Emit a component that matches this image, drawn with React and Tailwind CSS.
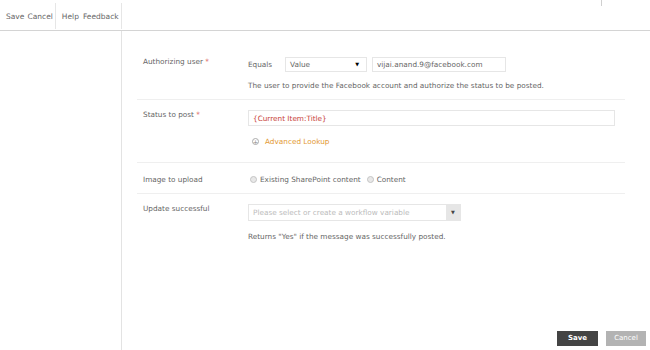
import React from 'react';

const font = { fontFamily: '"DejaVu Sans", Verdana, sans-serif' };

function Radio({ label }) {
  return (
    <label className="flex items-center gap-[3px]">
      <span className="w-[7px] h-[7px] rounded-full border border-[#c4c4c4] bg-[#e8e8e8]" />
      <span>{label}</span>
    </label>
  );
}

export default function App() {
  return (
    <div className="w-[650px] h-[350px] bg-white flex flex-col text-[7.3px] leading-[11px] text-[#666]" style={font}>
      {/* toolbar */}
      <div className="h-[31px] shrink-0 flex items-start border-b border-[#d4d4d4]">
        <div className="flex items-center h-[26px] mt-[3px] text-[7.5px]">
          <span className="pl-[6px] pr-[3px]">Save</span>
          <span className="pr-[2px]">Cancel</span>
          <span className="w-px h-full bg-[#e6e6e6] mr-[6px]" />
          <span className="pr-[4px]">Help</span>
          <span className="pr-[2px]">Feedback</span>
          <span className="w-px h-full bg-[#e6e6e6]" />
        </div>
        <div className="ml-auto mr-[48px] w-px h-[6px] bg-[#d0d0d0]" />
      </div>

      <div className="flex flex-1 min-h-0">
        <div className="w-[122px] shrink-0 border-r border-[#e3e3e3]" />

        <div className="flex-1 flex flex-col pl-[15px] pr-[4px]">
          <div className="w-[488px] pt-[19px]">
            {/* Authorizing user */}
            <div className="flex border-b border-[#efefef] pl-[6px] pt-[7px] pb-[8px]">
              <div className="w-[105px] -mt-[1px]">
                Authorizing user <span className="text-[#d9534f]">*</span>
              </div>
              <div className="flex flex-col">
                <div className="flex items-center">
                  <span className="w-[37px]">Equals</span>
                  <div className="w-[82px] h-[15px] border border-[#e6e6e6] flex items-center pl-[4px] pr-[7px]">
                    <span className="flex-1">Value</span>
                    <span className="text-[5px] text-black">▼</span>
                  </div>
                  <div className="ml-[5px] w-[134px] h-[15px] border border-[#e6e6e6] flex items-center pl-[4px]">
                    vijai.anand.9@facebook.com
                  </div>
                </div>
                <div className="mt-[8px]">
                  The user to provide the Facebook account and authorize the status to be posted.
                </div>
              </div>
            </div>

            {/* Status to post */}
            <div className="flex border-b border-[#efefef] pl-[6px] pt-[10px] pb-[15px]">
              <div className="w-[105px] -mt-[1px]">
                Status to post <span className="text-[#d9534f]">*</span>
              </div>
              <div className="flex flex-col">
                <div className="w-[367px] h-[16px] border border-[#e6e6e6] flex items-center pl-[4px] text-[#c9453a]">
                  {'{Current Item:Title}'}
                </div>
                <div className="mt-[10px] flex items-center pl-[4px]">
                  <span className="w-[7px] h-[7px] rounded-full border border-[#aaa] flex items-center justify-center text-[6px] leading-none text-[#888]">+</span>
                  <span className="ml-[6px] text-[#e39a35]">Advanced Lookup</span>
                </div>
              </div>
            </div>

            {/* Image to upload */}
            <div className="flex border-b border-[#efefef] pl-[6px] pt-[11px] pb-[8px]">
              <div className="w-[105px]">Image to upload</div>
              <div className="flex items-center gap-[6px] pl-[2px]">
                <Radio label="Existing SharePoint content" />
                <Radio label="Content" />
              </div>
            </div>

            {/* Update successful */}
            <div className="flex pl-[6px] pt-[9px]">
              <div className="w-[105px]">Update successful</div>
              <div className="flex flex-col pt-[1px]">
                <div className="w-[213px] h-[17px] border border-[#e6e6e6] flex items-center">
                  <span className="flex-1 pl-[4px] text-[#bbb]">Please select or create a workflow variable</span>
                  <span className="w-[14px] h-full bg-[#e6e6e6] flex items-center justify-center text-[5px] text-[#444]">▼</span>
                </div>
                <div className="mt-[10px]">Returns "Yes" if the message was successfully posted.</div>
              </div>
            </div>
          </div>

          <div className="mt-auto flex justify-end gap-[8px] pb-[4px]">
            <button className="w-[41px] h-[15px] bg-[#444] text-white text-[7px] font-bold leading-none">Save</button>
            <button className="w-[40px] h-[15px] bg-[#b3b3b3] text-white text-[7px] leading-none">Cancel</button>
          </div>
        </div>
      </div>
    </div>
  );
}
